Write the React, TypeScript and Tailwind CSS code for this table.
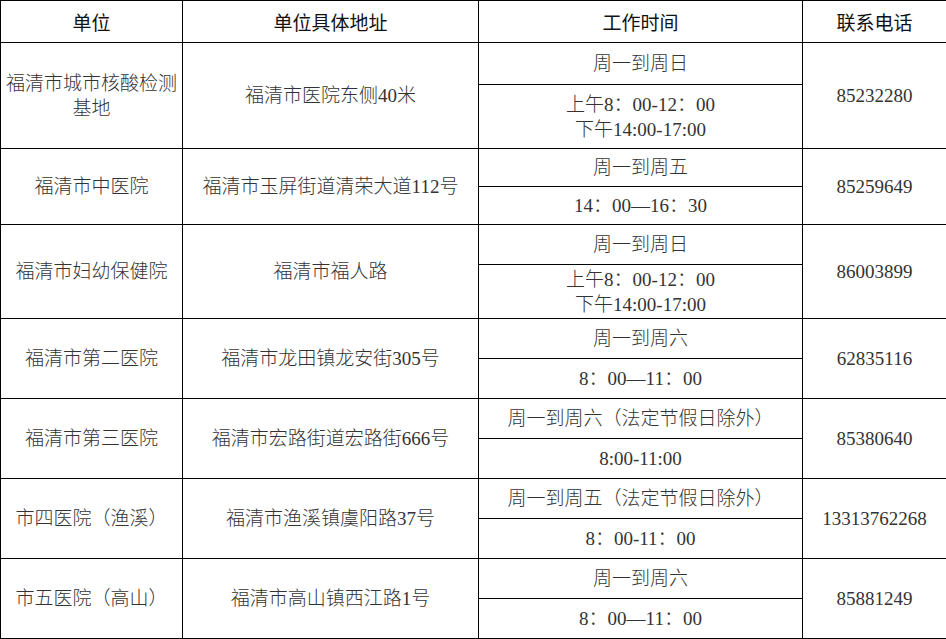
type Entry = {
  name: string[]
  address: string
  days: string
  hours: string[]
  phone: string
  top: number
  bottom: number
}

const entries: Entry[] = [
  {
    name: ["福清市城市核酸检测", "基地"],
    address: "福清市医院东侧40米",
    days: "周一到周日",
    hours: ["上午8：00-12：00", "下午14:00-17:00"],
    phone: "85232280",
    top: 42,
    bottom: 64,
  },
  {
    name: ["福清市中医院"],
    address: "福清市玉屏街道清荣大道112号",
    days: "周一到周五",
    hours: ["14：00—16：30"],
    phone: "85259649",
    top: 38,
    bottom: 38,
  },
  {
    name: ["福清市妇幼保健院"],
    address: "福清市福人路",
    days: "周一到周日",
    hours: ["上午8：00-12：00", "下午14:00-17:00"],
    phone: "86003899",
    top: 40,
    bottom: 54,
  },
  {
    name: ["福清市第二医院"],
    address: "福清市龙田镇龙安街305号",
    days: "周一到周六",
    hours: ["8：00—11：00"],
    phone: "62835116",
    top: 40,
    bottom: 40,
  },
  {
    name: ["福清市第三医院"],
    address: "福清市宏路街道宏路街666号",
    days: "周一到周六（法定节假日除外）",
    hours: ["8:00-11:00"],
    phone: "85380640",
    top: 40,
    bottom: 40,
  },
  {
    name: ["市四医院（渔溪）"],
    address: "福清市渔溪镇虞阳路37号",
    days: "周一到周五（法定节假日除外）",
    hours: ["8：00-11：00"],
    phone: "13313762268",
    top: 40,
    bottom: 40,
  },
  {
    name: ["市五医院（高山）"],
    address: "福清市高山镇西江路1号",
    days: "周一到周六",
    hours: ["8：00—11：00"],
    phone: "85881249",
    top: 40,
    bottom: 40,
  },
]

const cell = "border border-black text-center align-middle p-0"

export default function App() {
  return (
    <div className="w-[946px] bg-white">
      <table
        className="w-[946px] table-fixed border-collapse text-[19px] leading-[25px] text-[#333]"
        style={{ fontFamily: '"Liberation Serif", "Noto Sans CJK SC", serif' }}
      >
        <colgroup>
          <col className="w-[182px]" />
          <col className="w-[296px]" />
          <col className="w-[324px]" />
          <col className="w-[144px]" />
        </colgroup>
        <thead>
          <tr className="h-[42px]">
            {["单位", "单位具体地址", "工作时间", "联系电话"].map((h) => (
              <th
                key={h}
                className={`${cell} font-normal text-[#111] [font-family:'Noto_Sans_CJK_SC',sans-serif]`}
              >
                {h}
              </th>
            ))}
          </tr>
        </thead>
        <tbody className="font-light">
          {entries.map((e) => (
            <>
              <tr key={e.phone + "a"} style={{ height: e.top }}>
                <td rowSpan={2} className={cell}>
                  {e.name.map((n) => (
                    <div key={n}>{n}</div>
                  ))}
                </td>
                <td rowSpan={2} className={cell}>
                  {e.address}
                </td>
                <td className={cell}>{e.days}</td>
                <td rowSpan={2} className={cell}>
                  {e.phone}
                </td>
              </tr>
              <tr key={e.phone + "b"} style={{ height: e.bottom }}>
                <td className={cell}>
                  {e.hours.map((h) => (
                    <div key={h}>{h}</div>
                  ))}
                </td>
              </tr>
            </>
          ))}
        </tbody>
      </table>
    </div>
  )
}
